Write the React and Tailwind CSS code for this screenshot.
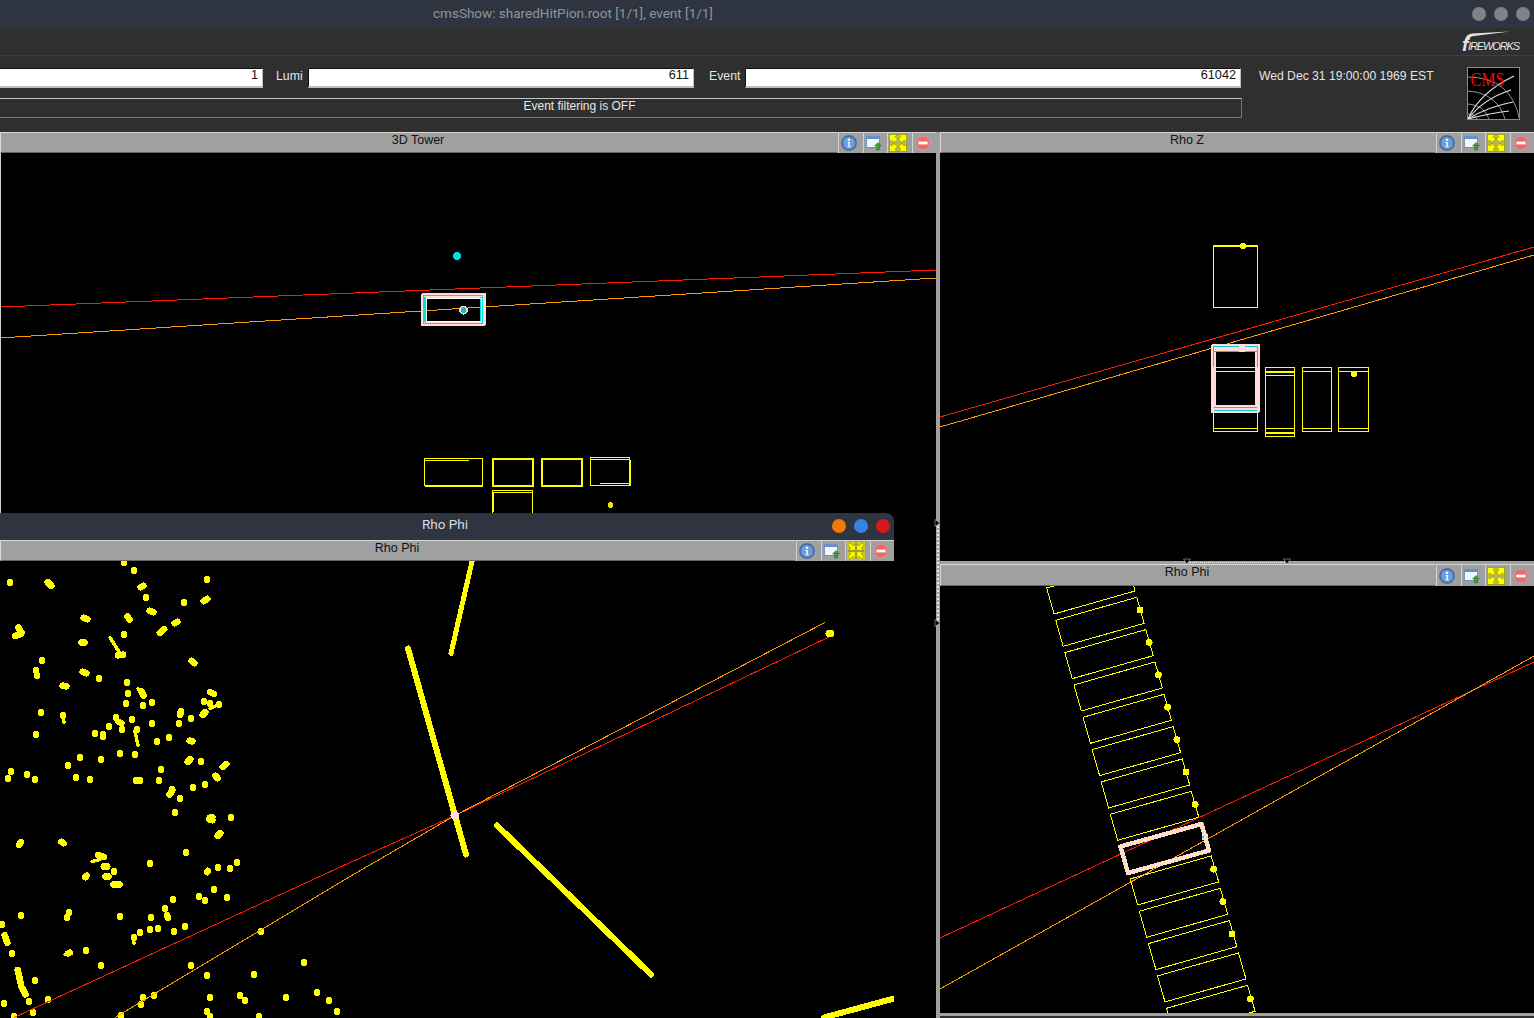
const sans = { fontFamily: '"Liberation Sans", Arial, sans-serif' }

const RED = '#ff1a00'
const ORANGE = '#ff9a00'
const YELLOW = '#ffff00'
const PINK = '#ffdcd8'
const CYAN = '#00e0e0'

// hits in the big Rho Phi view, page coordinates. [x, y] or [x1, y1, x2, y2]
const hits = [
  [10, 583], [47, 582, 52, 587], [124, 563], [134, 571], [140, 588, 144, 586], [146, 598], [207, 580], [184, 603],
  [203, 602, 208, 599], [149, 611, 154, 613], [83, 618, 88, 620], [127, 616, 130, 621], [159, 634, 165, 629],
  [174, 624, 178, 622], [124, 635], [14, 637, 22, 634], [18, 627, 22, 634], [81, 643, 85, 643], [117, 656, 124, 655],
  [191, 661, 195, 664], [42, 661], [36, 671], [37, 676], [82, 672, 87, 674], [99, 679], [62, 686, 67, 687], [127, 683],
  [128, 694], [141, 691, 144, 697], [209, 692, 215, 695], [126, 704], [143, 706], [152, 703], [204, 702], [210, 704],
  [219, 705], [202, 716, 206, 712], [180, 716, 181, 711], [191, 719], [41, 713], [63, 716], [116, 718],
  [118, 722, 122, 724], [132, 720], [109, 727], [122, 730], [152, 724], [179, 724], [137, 730], [95, 734],
  [103, 734, 103, 738], [36, 735], [157, 742], [169, 738], [189, 741, 193, 742], [120, 754], [135, 755], [80, 758],
  [101, 760], [68, 766], [187, 763, 191, 759], [201, 762], [222, 768, 227, 764], [215, 776, 218, 779], [161, 770],
  [11, 772], [27, 775], [8, 779], [35, 780], [76, 778], [90, 780], [135, 781, 141, 781], [159, 781], [205, 785],
  [193, 788], [172, 790], [169, 796, 173, 790], [180, 799], [175, 813], [209, 821, 213, 817], [209, 818, 213, 821],
  [231, 818], [217, 837, 221, 833], [19, 846, 21, 842], [61, 842, 64, 844], [186, 853], [97, 855, 105, 858],
  [150, 864], [103, 867, 108, 867], [114, 872], [207, 873, 208, 871], [218, 868], [230, 869], [237, 863],
  [105, 877, 109, 877], [85, 878, 87, 876], [112, 885, 121, 885], [214, 890], [173, 900], [199, 897], [205, 901],
  [227, 898], [21, 916], [69, 913], [67, 918], [120, 917], [165, 909], [167, 915, 168, 919], [151, 918], [150, 930],
  [158, 929], [174, 932], [185, 927], [140, 933], [134, 938], [68, 954, 70, 953], [86, 951], [101, 966], [2, 925],
  [4, 934, 8, 945], [12, 954], [17, 967, 22, 990], [22, 988, 26, 996], [35, 981], [29, 1002], [48, 1000], [4, 1004],
  [33, 1013], [14, 1017], [261, 932], [191, 966], [207, 976], [254, 975], [304, 963], [143, 998], [154, 996],
  [141, 1005], [210, 998], [240, 996], [245, 1001], [286, 998], [317, 993], [329, 1001], [337, 1012], [207, 1012],
  [121, 1016], [210, 1017], [259, 1017],
]

const thinTrails = [
  'M110 638 L120 654',
  'M138 689 L142 695',
  'M210 709 L219 705',
  'M92 862 L100 860',
  'M63 716 L64 723',
  'M135 732 L138 746',
  'M133 938 L134 944',
  'M65 955 L70 952',
]

function InfoIcon() {
  return (
    <svg width="16" height="16" viewBox="0 0 16 16">
      <circle cx="8" cy="8" r="7.2" fill="#5b8fd0" stroke="#3a5f98" strokeWidth="1.2" />
      <circle cx="8" cy="8" r="5.2" fill="#6ea0dc" />
      <circle cx="8" cy="4.8" r="1.2" fill="#fff" />
      <path d="M6.8 7h2v4.4h1v.9H6.4v-.9h1V7.9h-.6z" fill="#fff" />
    </svg>
  )
}

function WindowIcon() {
  return (
    <svg width="16" height="16" viewBox="0 0 16 16">
      <rect x="0.5" y="1.5" width="13" height="11" fill="#f4f6fa" stroke="#6b93c8" />
      <rect x="1" y="2" width="12" height="2" fill="#5e8fd0" />
      <path d="M12 7.5l3.5 3.5H13.5V15h-3v-4H8.5z" fill="#3e9a3a" stroke="#2f6e2c" strokeWidth="0.5" />
    </svg>
  )
}

function ExpandIcon({ inward }) {
  const d = inward
    ? 'M7.4 7.4V1.4L5.4 3.4 2.6 0.6 0.6 2.6 3.4 5.4 1.4 7.4z'
    : 'M0.4 0.4h7L5.4 2.4 7.6 4.6 4.6 7.6 2.4 5.4 0.4 7.4z'
  return (
    <svg width="18" height="18" viewBox="0 0 16 16">
      <rect x="0" y="0" width="7.6" height="7.6" fill="#d8d800" opacity="0.75" />
      <rect x="8.4" y="0" width="7.6" height="7.6" fill="#d8d800" opacity="0.75" />
      <rect x="0" y="8.4" width="7.6" height="7.6" fill="#d8d800" opacity="0.75" />
      <rect x="8.4" y="8.4" width="7.6" height="7.6" fill="#d8d800" opacity="0.75" />
      <path d={d} fill={YELLOW} stroke="#6e6e00" strokeWidth="0.5" />
      <path d={d} transform="matrix(-1 0 0 1 16 0)" fill={YELLOW} stroke="#6e6e00" strokeWidth="0.5" />
      <path d={d} transform="matrix(1 0 0 -1 0 16)" fill={YELLOW} stroke="#6e6e00" strokeWidth="0.5" />
      <path d={d} transform="matrix(-1 0 0 -1 16 16)" fill={YELLOW} stroke="#6e6e00" strokeWidth="0.5" />
    </svg>
  )
}

function CloseIcon() {
  return (
    <svg width="16" height="16" viewBox="0 0 16 16">
      <circle cx="8" cy="8" r="7" fill="#ee6a66" stroke="#c9a0a0" strokeWidth="1" />
      <rect x="3.4" y="6.6" width="9.2" height="2.8" fill="#fff" />
    </svg>
  )
}

function ViewButton({ children }) {
  return (
    <div className="flex h-full w-[24.5px] items-center justify-center border-t border-l border-t-[#d4d4d4] border-l-[#d4d4d4] bg-[#a0a0a0] pr-[3px]">
      {children}
    </div>
  )
}

function ViewHeader({ title, inward, height = 'h-[21px]' }) {
  return (
    <div className={`flex ${height} shrink-0 bg-[#a0a0a0]`} style={sans}>
      <div className="flex min-w-0 flex-1 items-center justify-center border-t border-b border-l border-t-[#d8d8d8] border-b-[#666666] border-l-[#d8d8d8] pr-[2px] pb-[5px] text-[12.5px] leading-none text-[#111111]">
        {title}
      </div>
      <div className="ml-px flex">
        <ViewButton><InfoIcon /></ViewButton>
        <ViewButton><WindowIcon /></ViewButton>
        <ViewButton><ExpandIcon inward={inward} /></ViewButton>
        <ViewButton><CloseIcon /></ViewButton>
      </div>
    </div>
  )
}

function Field({ value, className }) {
  return (
    <div className={`flex h-[20px] items-center justify-end border-t border-r border-b-2 border-t-[#111111] border-r-[#bdbdbd] border-b-[#bdbdbd] bg-white pr-[4px] pb-[3px] text-[12.7px] leading-none text-[#111111] ${className}`}>
      {value}
    </div>
  )
}

function TowerScene() {
  return (
    <svg className="block h-full w-full" viewBox="1 153 935 865" shapeRendering="crispEdges">
      <line x1="0" y1="307" x2="936" y2="270" stroke={RED} />
      <line x1="0" y1="338" x2="936" y2="278" stroke={ORANGE} />
      <circle cx="457" cy="256" r="4" fill={CYAN} />
      <path d="M423 293H484Q486 293 486 295V324Q486 326 484 326H423Q421 326 421 324V295Q421 293 423 293ZM427 299V321H482V299Z" fill={PINK} fillRule="evenodd" />
      <rect x="423.5" y="295.5" width="59" height="28" fill="none" stroke={CYAN} />
      <path d="M425 297V322M481 297V322" stroke={CYAN} strokeWidth="2" />
      <rect x="426.5" y="298.5" width="55" height="22.5" fill="none" stroke="#ffffff" />
      <circle cx="463.5" cy="310" r="4.5" fill={PINK} />
      <circle cx="463.5" cy="310" r="3" fill="#00c8c8" />
      <g fill="none" stroke={YELLOW}>
        <rect x="424.5" y="458.5" width="58" height="27" />
        <path d="M424 460.5H469M482.5 459V486M425 486.5H483" />
        <rect x="493" y="459" width="39.5" height="26.5" strokeWidth="2" />
        <rect x="542" y="459" width="39.5" height="26.5" strokeWidth="2" />
        <rect x="590.5" y="457.5" width="39" height="28" />
        <path d="M591 459.5H630M630.5 460V486M590 485.5H631M600 483.5H630" />
        <rect x="492.5" y="490.5" width="40" height="30" />
        <path d="M493 492.5H532M493 493V512M532.5 492V512" />
      </g>
      <circle cx="610.5" cy="505" r="3" fill="#e8e800" />
    </svg>
  )
}

function RhoZScene() {
  return (
    <svg className="block h-full w-full" viewBox="940 153 594 408" shapeRendering="crispEdges">
      <line x1="940" y1="417" x2="1534" y2="247" stroke={RED} />
      <line x1="940" y1="427" x2="1534" y2="255" stroke={ORANGE} />
      <g fill="none" stroke={YELLOW}>
        <rect x="1213.5" y="245.5" width="44" height="62" />
        <path d="M1214 246.5H1257" />
        <rect x="1213.5" y="367.5" width="44" height="64" />
        <path d="M1214 428.5H1257" />
        <rect x="1265.5" y="367.5" width="29" height="69" />
        <path d="M1266 372H1294" strokeWidth="2" />
        <path d="M1266 375.5H1294M1266 428.5H1294" />
        <path d="M1266 432.5H1294" strokeWidth="2" />
        <rect x="1302.5" y="367.5" width="29" height="64" />
        <path d="M1303 371.5H1331M1303 428.5H1331" />
        <rect x="1338.5" y="367.5" width="30" height="64" />
        <path d="M1339 371.5H1368M1339 428.5H1368" />
      </g>
      <circle cx="1243" cy="246" r="3.2" fill={YELLOW} />
      <circle cx="1354" cy="374" r="3.2" fill={YELLOW} />
      <path d="M1213 344H1258Q1260 344 1260 346V411Q1260 413 1258 413H1213Q1211 413 1211 411V346Q1211 344 1213 344ZM1216 352V405H1255V352Z" fill={PINK} fillRule="evenodd" />
      <path d="M1213.5 367V346.5H1239M1245 346.5H1257.5V367M1214 351.5H1239M1245 351.5H1257M1214 407.5H1257M1214 410.5H1257" fill="none" stroke="#10c8d0" />
      <path d="M1213.5 368V406M1257.5 368V406" fill="none" stroke="#ffe9a0" />
      <path d="M1216 367.5H1255M1216 371.5H1255" stroke={YELLOW} />
    </svg>
  )
}

// modules after the selected one sit a little further right
const modules = Array.from({ length: 14 }, (_, k) => {
  const i = k - 1
  const x = 1055.7 + 9.1 * i + (i > 7 ? 1.7 : 0)
  const y = 620.3 + 32.33 * i
  return { i, x, y, points: `${x},${y} ${x + 81},${y - 23} ${x + 88.5},${y + 3} ${x + 7.5},${y + 26}` }
})

function SideRhoPhiScene() {
  return (
    <svg className="block h-full w-full" viewBox="940 586 594 427" shapeRendering="crispEdges">
      {modules.map((m) =>
        m.i === 7 ? null : <polygon key={m.i} points={m.points} fill="none" stroke={YELLOW} strokeWidth="1" />
      )}
      {[0, 1, 2, 3, 4, 5, 6, 8, 9, 10, 12].map((i) => (
        <circle key={i} cx={1140 + 9.2 * i} cy={610 + 32.4 * i} r="3.4" fill={YELLOW} />
      ))}
      <line x1="940" y1="938" x2="1534" y2="662" stroke={RED} />
      <line x1="940" y1="989" x2="1534" y2="656" stroke={ORANGE} />
      <polygon points="1120.5,846.5 1201.5,824 1209,850.5 1128,873" fill="none" stroke={PINK} strokeWidth="4.5" strokeLinejoin="round" />
      <polygon points="1120.5,846.5 1201.5,824 1209,850.5 1128,873" fill="none" stroke="#ffe9a0" strokeWidth="1" />
      <circle cx="1205" cy="837" r="3.5" fill={PINK} />
      <circle cx="1203" cy="837" r="1" fill={CYAN} />
    </svg>
  )
}

function BigRhoPhiScene() {
  return (
    <svg className="block h-full w-full" viewBox="0 562 894 456" shapeRendering="crispEdges">
      <g stroke={YELLOW} strokeLinecap="round">
        {hits.map((h, n) =>
          h.length === 2 ? (
            <circle key={n} cx={h[0]} cy={h[1]} r="3.4" fill={YELLOW} stroke="none" />
          ) : (
            <line key={n} x1={h[0] + (h[2] - h[0]) * 0.15} y1={h[1] + (h[3] - h[1]) * 0.15} x2={h[2] - (h[2] - h[0]) * 0.15} y2={h[3] - (h[3] - h[1]) * 0.15} strokeWidth="6.6" />
          )
        )}
        {thinTrails.map((d) => (
          <path key={d} d={d} fill="none" strokeWidth="3.4" />
        ))}
        <line x1="472" y1="562" x2="451" y2="654" strokeWidth="5" />
        <line x1="408" y1="649" x2="466" y2="855" strokeWidth="6" />
        <line x1="497" y1="826" x2="651" y2="975" strokeWidth="6" />
        <line x1="824" y1="1018" x2="894" y2="999" strokeWidth="6" />
      </g>
      <polyline points="14,1018 350,863 455,816 830,637" fill="none" stroke={RED} />
      <polyline points="115,1018 350,877 455,816 825,623" fill="none" stroke={ORANGE} />
      <ellipse cx="830" cy="634" rx="4.5" ry="3.5" fill={YELLOW} />
      <circle cx="455" cy="816" r="4.5" fill={PINK} />
    </svg>
  )
}

function CmsLogo() {
  return (
    <svg width="53" height="53" viewBox="0 0 53 53" className="block">
      <rect width="53" height="53" fill="#000000" />
      <g fill="none" stroke="#b8b8b8" strokeWidth="0.8">
        <path d="M0.5 10 Q44 10 52.5 52" />
        <path d="M1 24 Q30 26 38 52" />
        <path d="M1 37 Q17 38 22 52" />
        <path d="M1 47 Q8 47 10 52" />
      </g>
      <g fill="none" stroke="#e2e2e2" strokeWidth="1.1">
        <path d="M1 52 Q12 26 47 9" />
        <path d="M1 52 Q16 32 44 23" />
        <path d="M1 52 Q20 40 46 35" />
        <path d="M1 52 Q24 46 42 44" />
      </g>
      <rect x="0.5" y="0.5" width="52" height="52" fill="none" stroke="#8a8a8a" />
      <text x="3.5" y="18.5" fill="#ff0000" fontSize="18" textLength="34" lengthAdjust="spacingAndGlyphs" fontFamily='"Liberation Serif", serif'>CMS</text>
    </svg>
  )
}

function FireworksLogo() {
  return (
    <div className="relative h-[22px] w-[60px] text-[#e6e6e6]" style={sans}>
      <svg className="absolute top-0 left-0" width="60" height="22" viewBox="0 0 60 22">
        <path d="M3 9 Q4 3 10 2.4 L48 0.5 L12 5 Q7 5.5 6 10z" fill="#e2e2e2" />
      </svg>
      <span className="absolute top-[4px] left-0 text-[19px] leading-none font-bold italic">f</span>
      <span className="absolute top-[10px] left-[6px] text-[11px] leading-none tracking-[-1.1px] italic">IREWORKS</span>
    </div>
  )
}

function Dot({ className }) {
  return <div className={`h-[14px] w-[14px] rounded-full ${className}`} />
}

function Nub({ className }) {
  return (
    <svg width="8" height="8" viewBox="0 0 8 8" className={`absolute ${className}`}>
      <path d="M1 0.5l5 3.5-5 3.5z" fill="#000000" stroke="#d0d0d0" strokeWidth="0.5" />
    </svg>
  )
}

export default function App() {
  return (
    <div className="relative flex h-[1018px] w-[1534px] flex-col overflow-hidden bg-[#2f2f2f]" style={sans}>
      {/* window title */}
      <div className="relative flex h-[28px] shrink-0 items-center bg-[#2e3440]">
        <div
          className="w-[1146px] pb-[1px] text-center text-[13.5px] leading-none text-[#8f949c]"
          style={{ fontFamily: 'Roboto, sans-serif' }}
        >
          cmsShow: sharedHitPion.root [1/1], event [1/1]
        </div>
        <div className="ml-auto flex gap-2 pr-1">
          <Dot className="bg-[#7f8288]" />
          <Dot className="bg-[#7f8288]" />
          <Dot className="bg-[#7f8288]" />
        </div>
      </div>

      {/* tool row */}
      <div className="flex h-[28px] shrink-0 items-center justify-end border-b border-[#4a3a38] pr-[12px]">
        <FireworksLogo />
      </div>

      <div className="flex h-[76px] shrink-0 pt-[11px]">
        <div className="w-[1467px]">
          <div className="flex h-[21px] items-center text-[12.3px] text-[#e4e4e4]">
            <Field value="1" className="w-[263px]" />
            <span className="ml-[13px] w-[32px] pb-[3px]">Lumi</span>
            <Field value="611" className="w-[386px] border-l border-l-[#111111]" />
            <span className="ml-[15px] w-[36px] pb-[3px]">Event</span>
            <Field value="61042" className="w-[496px] border-l border-l-[#111111]" />
            <span className="ml-[18px] pb-[3px] text-[12.15px] whitespace-nowrap">Wed Dec 31 19:00:00 1969 EST</span>
          </div>
          <div className="mt-[10px] flex h-[20px] w-[1242px] items-center justify-center border-t border-r border-b border-t-[#c4c4c4] border-r-[#777777] border-b-[#777777] pb-[4px] text-[12px] leading-none text-[#e8e8e8]">
            <span className="mr-[82px]">Event filtering is OFF</span>
          </div>
        </div>
        <CmsLogo />
      </div>

      {/* views */}
      <div className="flex min-h-0 flex-1">
        <div className="flex w-[936px] shrink-0 flex-col">
          <ViewHeader title="3D Tower" />
          <div className="min-h-0 flex-1 border-l border-[#cfcfcf] bg-black">
            <TowerScene />
          </div>
        </div>

        <div className="relative w-[4px] shrink-0 bg-[#a0a0a0]">
          <div className="absolute top-[391px] left-[1px] h-[100px] border-l-2 border-dotted border-[#e8e8e8]" />
          <Nub className="top-[387px] -left-[2px]" />
          <Nub className="top-[487px] -left-[2px]" />
        </div>

        <div className="flex min-w-0 flex-1 flex-col">
          <ViewHeader title="Rho Z" />
          <div className="h-[408px] shrink-0 bg-black">
            <RhoZScene />
          </div>
          <div className="relative h-[3px] shrink-0 bg-[#a0a0a0]">
            <div className="absolute top-[1px] left-[247px] w-[100px] border-t border-dotted border-[#e8e8e8]" />
            <Nub className="-top-[3px] left-[243px] rotate-90" />
            <Nub className="-top-[3px] left-[343px] rotate-90" />
          </div>
          <ViewHeader title="Rho Phi" height="h-[22px]" />
          <div className="h-[427px] shrink-0 bg-black">
            <SideRhoPhiScene />
          </div>
          <div className="h-[3px] shrink-0 bg-[#a0a0a0]" />
        </div>
      </div>

      {/* floating Rho Phi window */}
      <div className="absolute top-[513px] left-0 flex h-[505px] w-[894px] flex-col">
        <div className="relative flex h-[27px] shrink-0 items-center rounded-tr-[8px] bg-[#2e3440]">
          <div
            className="w-[890px] pb-[3px] text-center text-[13.5px] leading-none text-[#d8dae0]"
            style={{ fontFamily: 'Roboto, sans-serif' }}
          >
            Rho Phi
          </div>
          <div className="absolute top-[6px] right-[4px] flex gap-2">
            <Dot className="bg-[#f57900]" />
            <Dot className="bg-[#3584e4]" />
            <Dot className="bg-[#d61a1a]" />
          </div>
        </div>
        <ViewHeader title="Rho Phi" inward />
        <div className="min-h-0 flex-1 bg-black">
          <BigRhoPhiScene />
        </div>
      </div>
    </div>
  )
}
